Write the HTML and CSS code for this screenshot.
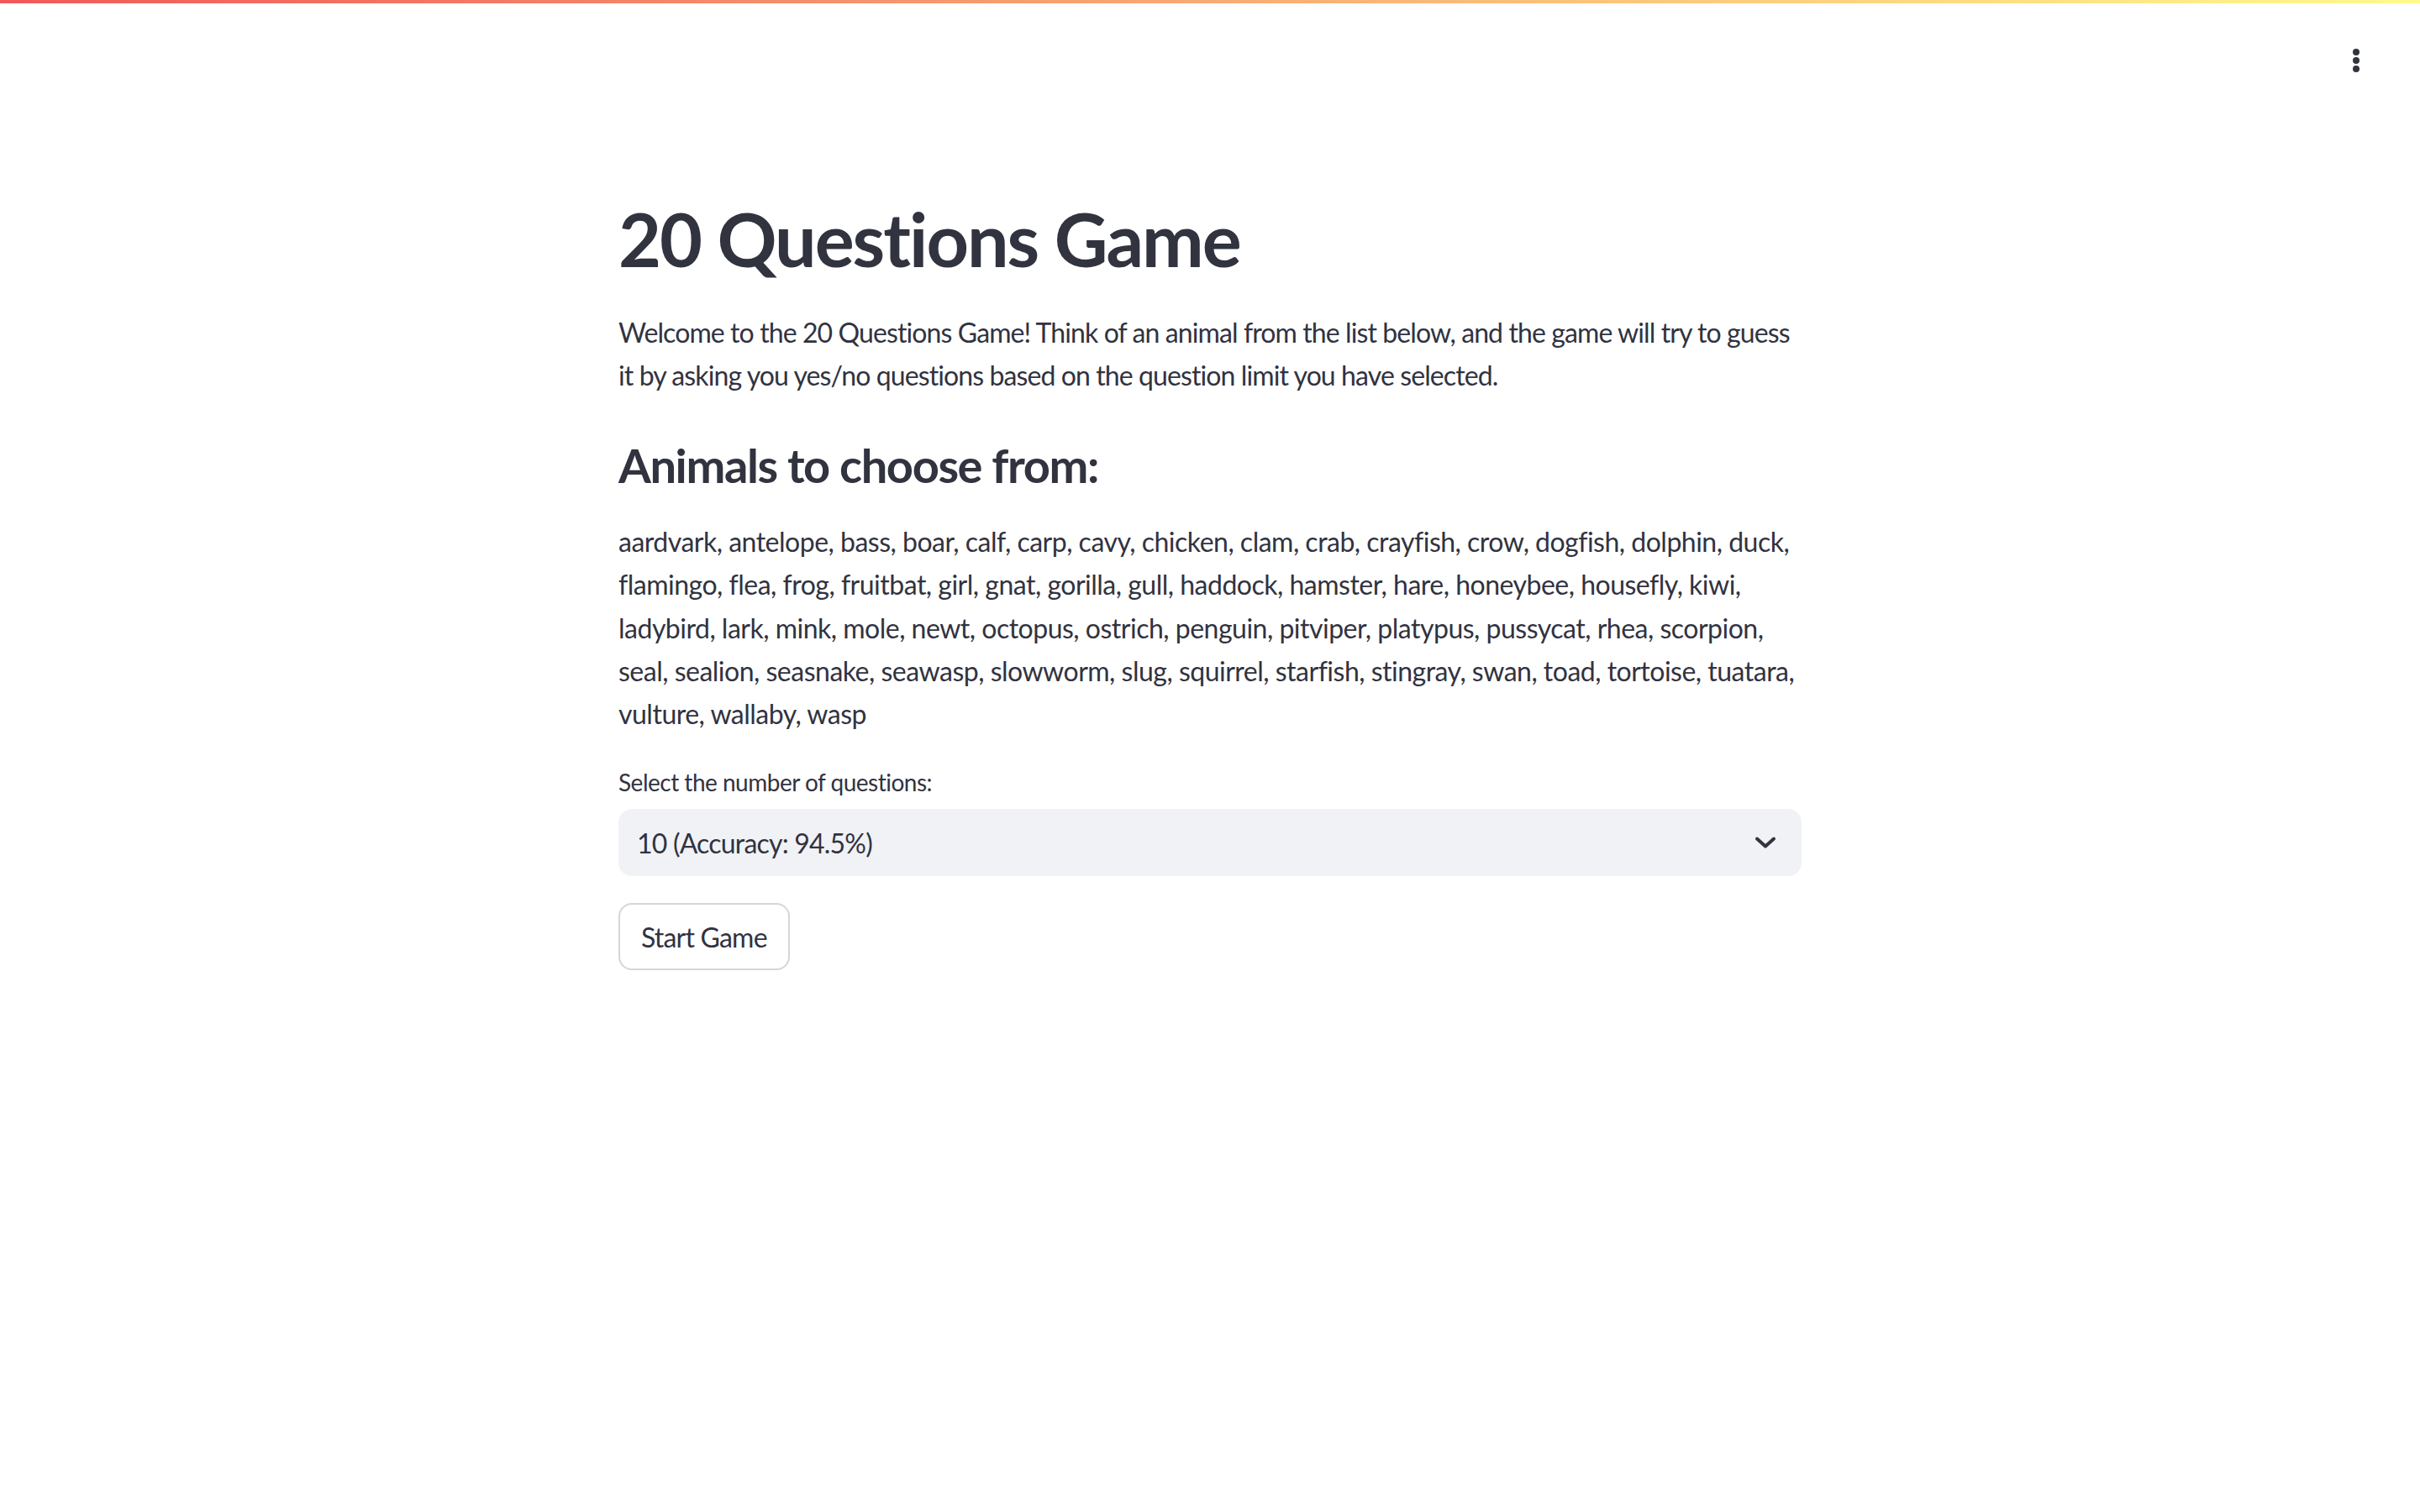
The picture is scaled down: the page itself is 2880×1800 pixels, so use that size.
FILE: index.html
```html
<!DOCTYPE html>
<html lang="en">
<head>
<meta charset="utf-8">
<title>20 Questions Game</title>
<link rel="stylesheet" href="styles.css">
</head>
<body>
<div class="app">
  <div class="decoration"></div>
  <header class="header">
    <button class="menu-btn" aria-label="Main menu">
      <svg width="14" height="34" viewBox="0 0 14 34" aria-hidden="true">
        <circle cx="7" cy="7" r="4" fill="#31333F"/>
        <circle cx="7" cy="17" r="4" fill="#31333F"/>
        <circle cx="7" cy="27" r="4" fill="#31333F"/>
      </svg>
    </button>
  </header>
  <main class="main">
    <div class="block">
      <div class="md">
        <h1 class="title">20 Questions Game</h1>
      </div>
      <div class="md">
        <p class="intro">Welcome to the 20 Questions Game! Think of an animal from the list below, and the game will try to guess it by asking you yes/no questions based on the question limit you have selected.</p>
      </div>
      <div class="md">
        <h3 class="subtitle">Animals to choose from:</h3>
      </div>
      <div class="md">
        <p>aardvark, antelope, bass, boar, calf, carp, cavy, chicken, clam, crab, crayfish, crow, dogfish, dolphin, duck, flamingo, flea, frog, fruitbat, girl, gnat, gorilla, gull, haddock, hamster, hare, honeybee, housefly, kiwi, ladybird, lark, mink, mole, newt, octopus, ostrich, penguin, pitviper, platypus, pussycat, rhea, scorpion, seal, sealion, seasnake, seawasp, slowworm, slug, squirrel, starfish, stingray, swan, toad, tortoise, tuatara, vulture, wallaby, wasp</p>
      </div>
      <div class="widget">
        <label class="label">Select the number of questions:</label>
        <div class="select">
          <span class="select-value">10 (Accuracy: 94.5%)</span>
          <svg class="chevron" width="26" height="16" viewBox="0 0 26 16" aria-hidden="true">
            <path d="M3 3.5 13 12.5 23 3.5" fill="none" stroke="#31333F" stroke-width="4" stroke-linecap="round" stroke-linejoin="round"/>
          </svg>
        </div>
      </div>
      <div class="widget">
        <button class="btn">Start Game</button>
      </div>
    </div>
  </main>
</div>
</body>
</html>
```

FILE: styles.css
```css
* { box-sizing: border-box; }

html, body {
  margin: 0;
  padding: 0;
  background: #ffffff;
}

body {
  font-family: "Lato", "Noto Sans", sans-serif;
  color: rgb(49, 51, 63);
  -webkit-font-smoothing: antialiased;
}

.app {
  position: relative;
  min-height: 100vh;
}

.decoration {
  position: absolute;
  top: 0;
  left: 0;
  right: 0;
  height: 4px;
  background: linear-gradient(90deg, rgb(240, 90, 90), rgb(255, 250, 140));
  z-index: 3;
}

.header {
  position: absolute;
  top: 0;
  left: 0;
  right: 0;
  height: 120px;
  display: flex;
  justify-content: flex-end;
  align-items: flex-start;
  padding: 52px 56px 0 0;
}

.menu-btn {
  border: none;
  background: transparent;
  width: 40px;
  height: 40px;
  padding: 0;
  display: flex;
  align-items: center;
  justify-content: center;
  cursor: pointer;
}

.main {
  display: flex;
  justify-content: center;
  padding: 192px 32px 320px;
}

.block {
  width: 1408px;
  display: flex;
  flex-direction: column;
  gap: 32px;
}

.md {
  margin-bottom: -32px;
}

.md p {
  margin: 0 0 32px;
  font-size: 32px;
  line-height: 51.2px;
  letter-spacing: -0.5px;
}

.md p.intro {
  letter-spacing: -0.9px;
}

.title {
  margin: 0;
  padding: 40px 0 32px;
  font-size: 88px;
  line-height: 1.2;
  font-weight: 700;
  letter-spacing: -2px;
}

.subtitle {
  margin: 0;
  padding: 16px 0 32px;
  font-size: 56px;
  line-height: 1.2;
  font-weight: 700;
  letter-spacing: -1.4px;
}

.widget {
  display: flex;
  flex-direction: column;
  align-items: flex-start;
}

.label {
  font-size: 28px;
  line-height: 48px;
  margin-bottom: 8px;
  letter-spacing: -0.5px;
}

.select {
  width: 100%;
  height: 80px;
  background: rgb(240, 242, 246);
  border-radius: 16px;
  display: flex;
  align-items: center;
  justify-content: space-between;
  padding: 0 30px 0 22px;
}

.select-value {
  font-size: 32px;
  letter-spacing: -0.8px;
}

.chevron {
  display: block;
}

.btn {
  font-family: inherit;
  font-size: 32px;
  letter-spacing: -0.8px;
  color: rgb(49, 51, 63);
  background: #ffffff;
  border: 2px solid rgba(49, 51, 63, 0.2);
  border-radius: 16px;
  height: 80px;
  padding: 0 25px;
  display: flex;
  align-items: center;
}
```
